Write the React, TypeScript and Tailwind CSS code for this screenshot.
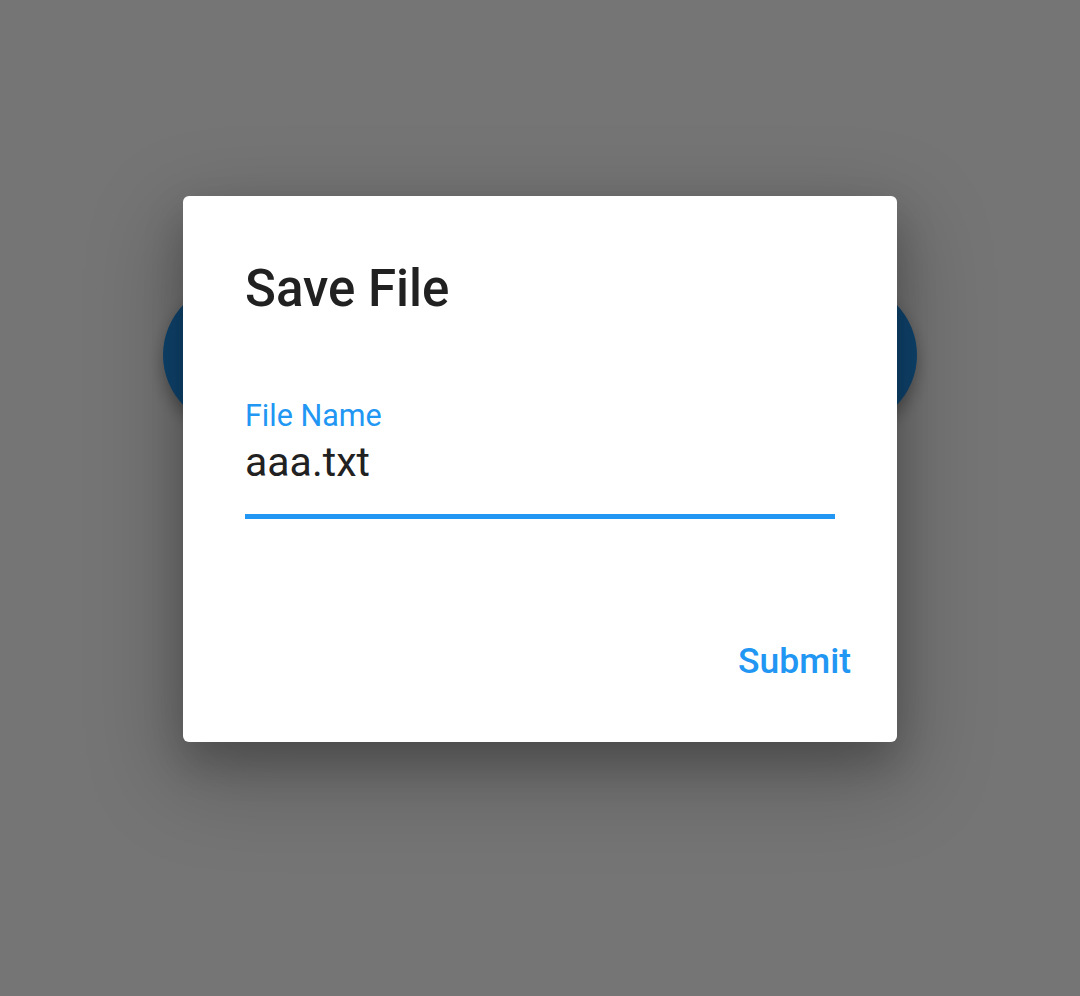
import React from "react";

export default function App() {
  return (
    <div className="relative w-full h-[996px] overflow-hidden bg-white" style={{ fontFamily: "Roboto, 'Liberation Sans', sans-serif" }}>
      {/* page behind the dialog */}
      <div className="pt-[283px] px-[163px]">
        <div className="h-[144px] rounded-full bg-[#2196f3] shadow-[0_8px_16px_rgba(0,0,0,0.3)]" />
      </div>

      {/* backdrop + dialog */}
      <div className="absolute inset-0 bg-[rgba(0,0,0,0.54)] flex justify-center items-start pt-[196px]">
        <div className="w-[714px] rounded-[6px] bg-white pt-[62px] pb-[60px] px-[62px] shadow-[0_30px_90px_10px_rgba(0,0,0,0.22),0_20px_40px_rgba(0,0,0,0.2)] flex flex-col">
          <h2 className="text-[51px] leading-[62px] font-medium text-[#212121]">Save File</h2>

          <div className="mt-[78px] flex flex-col">
            <label className="text-[30.5px] leading-[36px] text-[#2196f3]">File Name</label>
            <div className="mt-[3px] text-[41px] leading-[50px] text-[#212121]">aaa.txt</div>
            <div className="mt-[27px] h-[5px] bg-[#2196f3]" />
          </div>

          <div className="mt-[121px] flex justify-end -mr-[16px]">
            <button className="text-[35.5px] leading-[42px] font-medium text-[#2196f3]">Submit</button>
          </div>
        </div>
      </div>
    </div>
  );
}
